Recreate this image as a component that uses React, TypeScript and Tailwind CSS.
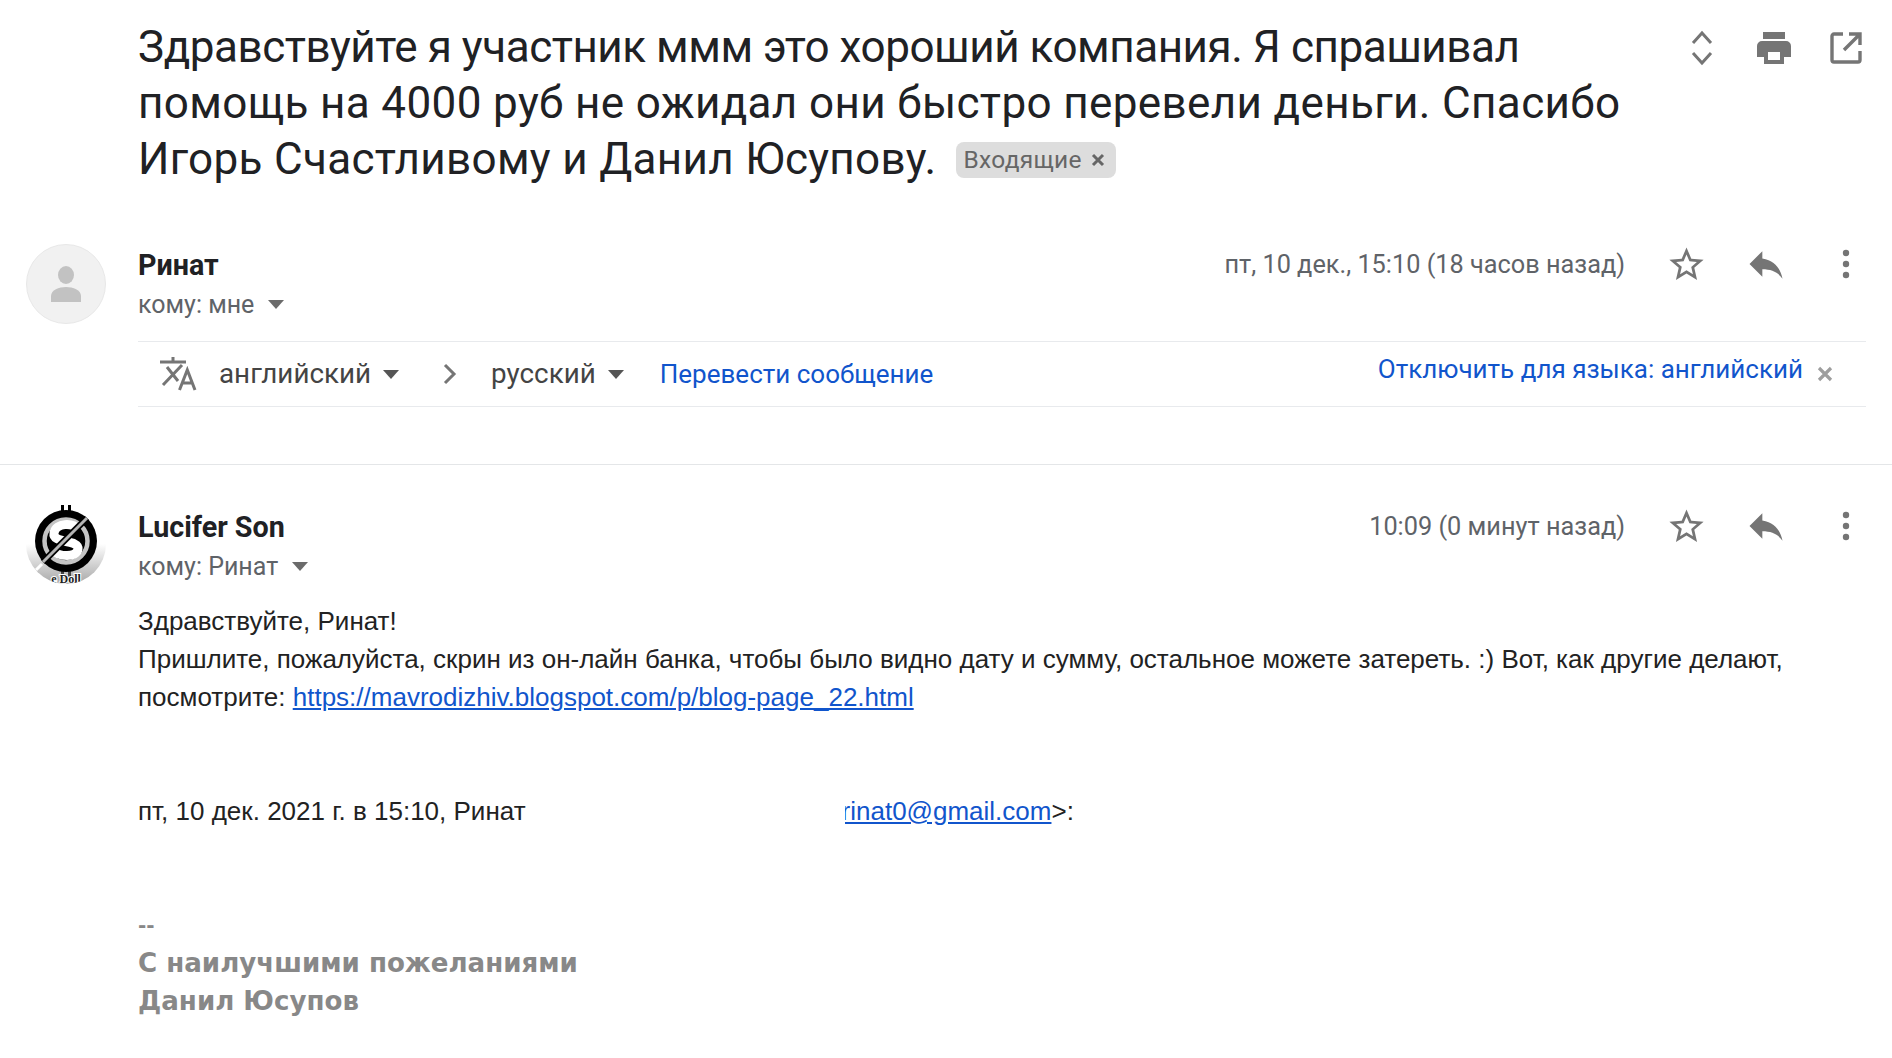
const titleFont = "font-['Roboto',sans-serif]";
const uiFont = "font-['Roboto',sans-serif]";
const bodyFont = "font-['Liberation_Sans',Arial,sans-serif]";

function Caret({ className = "" }: { className?: string }) {
  return (
    <svg width="16" height="9" viewBox="0 0 16 9" className={className}>
      <path d="M0 0h16L8 9z" fill="currentColor" />
    </svg>
  );
}

function Star() {
  return (
    <svg width="41" height="41" viewBox="0 0 24 24" fill="#757575">
      <path d="M22 9.24l-7.19-.62L12 2 9.19 8.63 2 9.24l5.46 4.73L5.82 21 12 17.27 18.18 21l-1.63-7.03L22 9.24zM12 15.4l-3.76 2.27 1-4.28-3.32-2.88 4.38-.38L12 6.1l1.71 4.04 4.38.38-3.32 2.88 1 4.28L12 15.4z" />
    </svg>
  );
}

function Reply() {
  return (
    <svg width="44" height="44" viewBox="0 0 24 24" fill="#757575">
      <path d="M10 9V5l-7 7 7 7v-4.1c5 0 8.5 1.6 11 5.1-1-5-4-10-11-11z" />
    </svg>
  );
}

function Dots() {
  return (
    <svg width="8" height="30" viewBox="0 0 8 30" fill="#757575">
      <circle cx="4" cy="4" r="3.2" />
      <circle cx="4" cy="15" r="3.2" />
      <circle cx="4" cy="26" r="3.2" />
    </svg>
  );
}

function MessageActions({ time }: { time: string }) {
  return (
    <div className="flex items-center h-[40px]">
      <span className={`${uiFont} text-[25.3px] text-[#5f6368] mr-[41px]`}>{time}</span>
      <div className="flex items-center mt-[-2px]">
        <div className="mr-[37px]"><Star /></div>
        <div className="mr-[54px]"><Reply /></div>
        <Dots />
      </div>
    </div>
  );
}

function DefaultAvatar() {
  return (
    <div className="w-[80px] h-[80px] rounded-full bg-[#f1f1f1] border border-[#e8e8e8] flex items-center justify-center shrink-0">
      <svg width="34" height="38" viewBox="0 0 34 38" fill="#c2c2c2">
        <ellipse cx="17" cy="10" rx="8" ry="9" />
        <path d="M2 37v-6c0-6 8-9 15-9s15 3 15 9v6z" />
      </svg>
    </div>
  );
}

function LogoAvatar() {
  return (
    <div className="w-[80px] h-[80px] rounded-full shrink-0 overflow-hidden bg-gradient-to-b from-white from-50% to-[#a8a8a8]">
      <svg width="80" height="80" viewBox="0 0 80 80">
        <rect x="35" y="1" width="3" height="9" fill="#000" />
        <rect x="42" y="1" width="3" height="9" fill="#000" />
        <rect x="35" y="66" width="3" height="8" fill="#444" />
        <rect x="42" y="66" width="3" height="8" fill="#444" />
        <circle cx="40" cy="37" r="31" fill="#000" />
        <circle cx="40" cy="37" r="21.5" fill="#000" stroke="#c4c4c4" strokeWidth="4.5" />
        <path d="M52 25c-5-6-22-7-24 4-2 11 25 6 24 16-1 9-20 8-25 1" fill="none" stroke="#fff" strokeWidth="9" />
        <path d="M17 58 61 14" stroke="#000" strokeWidth="6.5" />
        <path d="M17 58 61 14" stroke="#b4b4b4" strokeWidth="3" />
        <path d="M10 66 16 60M62 12l6-6" stroke="#ffffff" strokeWidth="3" />
        <text x="40" y="79" textAnchor="middle" fontFamily="'Liberation Serif', serif" fontWeight="bold" fontSize="12" fill="#222222" stroke="#ffffff" strokeWidth="2" paintOrder="stroke">e Doll</text>
      </svg>
    </div>
  );
}

export default function App() {
  return (
    <div className="w-[1892px] h-[1058px] bg-white overflow-hidden relative">
      <div className="flex pl-[138px] pt-[19px] h-[225px]">
        <h1 className={`${titleFont} whitespace-nowrap text-[44px] leading-[56px] font-normal text-[#202124]`}>
          <span className="block tracking-[-0.45px]">Здравствуйте я участник ммм это хороший компания. Я спрашивал</span>
          <span className="block tracking-[0.37px]">помощь на 4000 руб не ожидал они быстро перевели деньги. Спасибо</span>
          <span className="flex items-center tracking-[0.32px]">
            Игорь Счастливому и Данил Юсупову.
            <span className={`${uiFont} ml-[19px] mt-[2px] h-[36px] w-[160px] rounded-[8px] bg-[#dddddd] text-[#666666] text-[24.5px] flex items-center pl-[8px] tracking-[0.3px]`}>
              Входящие
              <svg width="14" height="14" viewBox="0 0 14 14" className="ml-[9px]">
                <path d="M2 2l10 10M12 2 2 12" stroke="#666666" strokeWidth="3" />
              </svg>
            </span>
          </span>
        </h1>
      </div>

      <div className="absolute right-[30px] top-[30px] flex items-center">
        <svg width="24" height="36" viewBox="0 0 24 36" fill="none" stroke="#757575" strokeWidth="3" className="mr-[43px]">
          <path d="M3 13 12 3l9 10M3 23l9 10 9-10" />
        </svg>
        <svg width="34" height="32" viewBox="0 0 34 32" fill="#757575" className="mr-[39px]">
          <path d="M6 0h22v7H6zM5 9h24a5 5 0 0 1 5 5v11h-7v7H7v-7H0V14a5 5 0 0 1 5-5zm6 11v8h12v-8z" />
        </svg>
        <svg width="32" height="32" viewBox="0 0 32 32" fill="none" stroke="#757575" strokeWidth="3.4">
          <path d="M13 2H4a2 2 0 0 0-2 2v24a2 2 0 0 0 2 2h24a2 2 0 0 0 2-2v-9M19 2h11v11M30 2 14 18" />
        </svg>
      </div>

      <section className="flex pl-[26px] pr-[26px] border-b-[1.5px] border-[#e4e6e8] h-[240px]">
        <div className="pt-[19px]"><DefaultAvatar /></div>
        <div className="flex-1 pl-[32px] pt-[20px]">
          <div className="flex justify-between pr-[16px]">
            <span className={`${uiFont} text-[28.7px] leading-[40px] font-bold text-[#202124]`}>Ринат</span>
            <MessageActions time="пт, 10 дек., 15:10 (18 часов назад)" />
          </div>
          <div className={`${uiFont} text-[25px] leading-[40px] text-[#5f6368] flex items-center`}>
            кому: мне
            <Caret className="ml-[14px] mt-[-2px] text-[#6b6b6b]" />
          </div>
          <div className={`${uiFont} mt-[16px] h-[66px] border-y-[1.5px] border-[#e8eaed] flex items-center text-[27.8px] text-[#444444]`}>
            <svg width="40" height="38" viewBox="8 10 40 38" className="ml-[20px] mr-[21px]" fill="none" stroke="#757575" strokeWidth="3">
              <path d="M10 17h26M23 12v5M32 20 13 40M17 22l11 14M29.5 45l7.8-20L45 45M32 38h11" />
            </svg>
            английский
            <Caret className="ml-[12px] text-[#555555]" />
            <svg width="14" height="22" viewBox="0 0 14 22" className="ml-[44px] mr-[34px]" fill="none" stroke="#757575" strokeWidth="3">
              <path d="M2 2l9 9-9 9" />
            </svg>
            русский
            <Caret className="ml-[12px] text-[#555555]" />
            <span className="text-[#1155cc] text-[26px] ml-[36px]">Перевести сообщение</span>
            <span className="text-[#1155cc] text-[26px] ml-auto relative top-[-5px]">Отключить для языка: английский</span>
            <svg width="16" height="16" viewBox="0 0 16 16" className="ml-[14px] mr-[33px]">
              <path d="M2 2l12 12M14 2 2 14" stroke="#9e9e9e" strokeWidth="3.2" />
            </svg>
          </div>
        </div>
      </section>

      <section className="flex pl-[26px] pr-[26px] pt-[42px]">
        <div className="mt-[-3px]"><LogoAvatar /></div>
        <div className="flex-1 pl-[32px]">
          <div className="flex justify-between pr-[16px]">
            <span className={`${uiFont} text-[28.7px] leading-[40px] font-bold text-[#202124]`}>Lucifer Son</span>
            <MessageActions time="10:09 (0 минут назад)" />
          </div>
          <div className={`${uiFont} text-[25px] leading-[40px] text-[#5f6368] flex items-center`}>
            кому: Ринат
            <Caret className="ml-[14px] mt-[-2px] text-[#6b6b6b]" />
          </div>
          <div className={`${bodyFont} mt-[15px] text-[26px] leading-[38px] text-[#222222] whitespace-nowrap`}>
            <p>Здравствуйте, Ринат!</p>
            <p>Пришлите, пожалуйста, скрин из он-лайн банка, чтобы было видно дату и сумму, остальное можете затереть. :) Вот, как другие делают,</p>
            <p>
              посмотрите: <a className="text-[#1155cc] underline">https://mavrodizhiv.blogspot.com/p/blog-page_22.html</a>
            </p>
            <div className="mt-[76px] flex">
              <span>пт, 10 дек. 2021 г. в 15:10, Ринат</span>
              <span className="ml-[316px] relative">
                <a className="text-[#1155cc] underline">rinat0@gmail.com</a>&gt;:
                <span className="absolute left-[-1px] top-0 h-full w-[4px] bg-white" />
              </span>
            </div>
            <p className="mt-[76px] font-['DejaVu_Sans',sans-serif] font-bold text-[#888888] text-[20px] leading-[38px]">--</p>
            <p className="font-['DejaVu_Sans',sans-serif] font-bold text-[#888888] text-[26.1px] leading-[38px]">С наилучшими пожеланиями</p>
            <p className="font-['DejaVu_Sans',sans-serif] font-bold text-[#888888] text-[26.1px] leading-[38px]">Данил Юсупов</p>
          </div>
        </div>
      </section>
    </div>
  );
}
